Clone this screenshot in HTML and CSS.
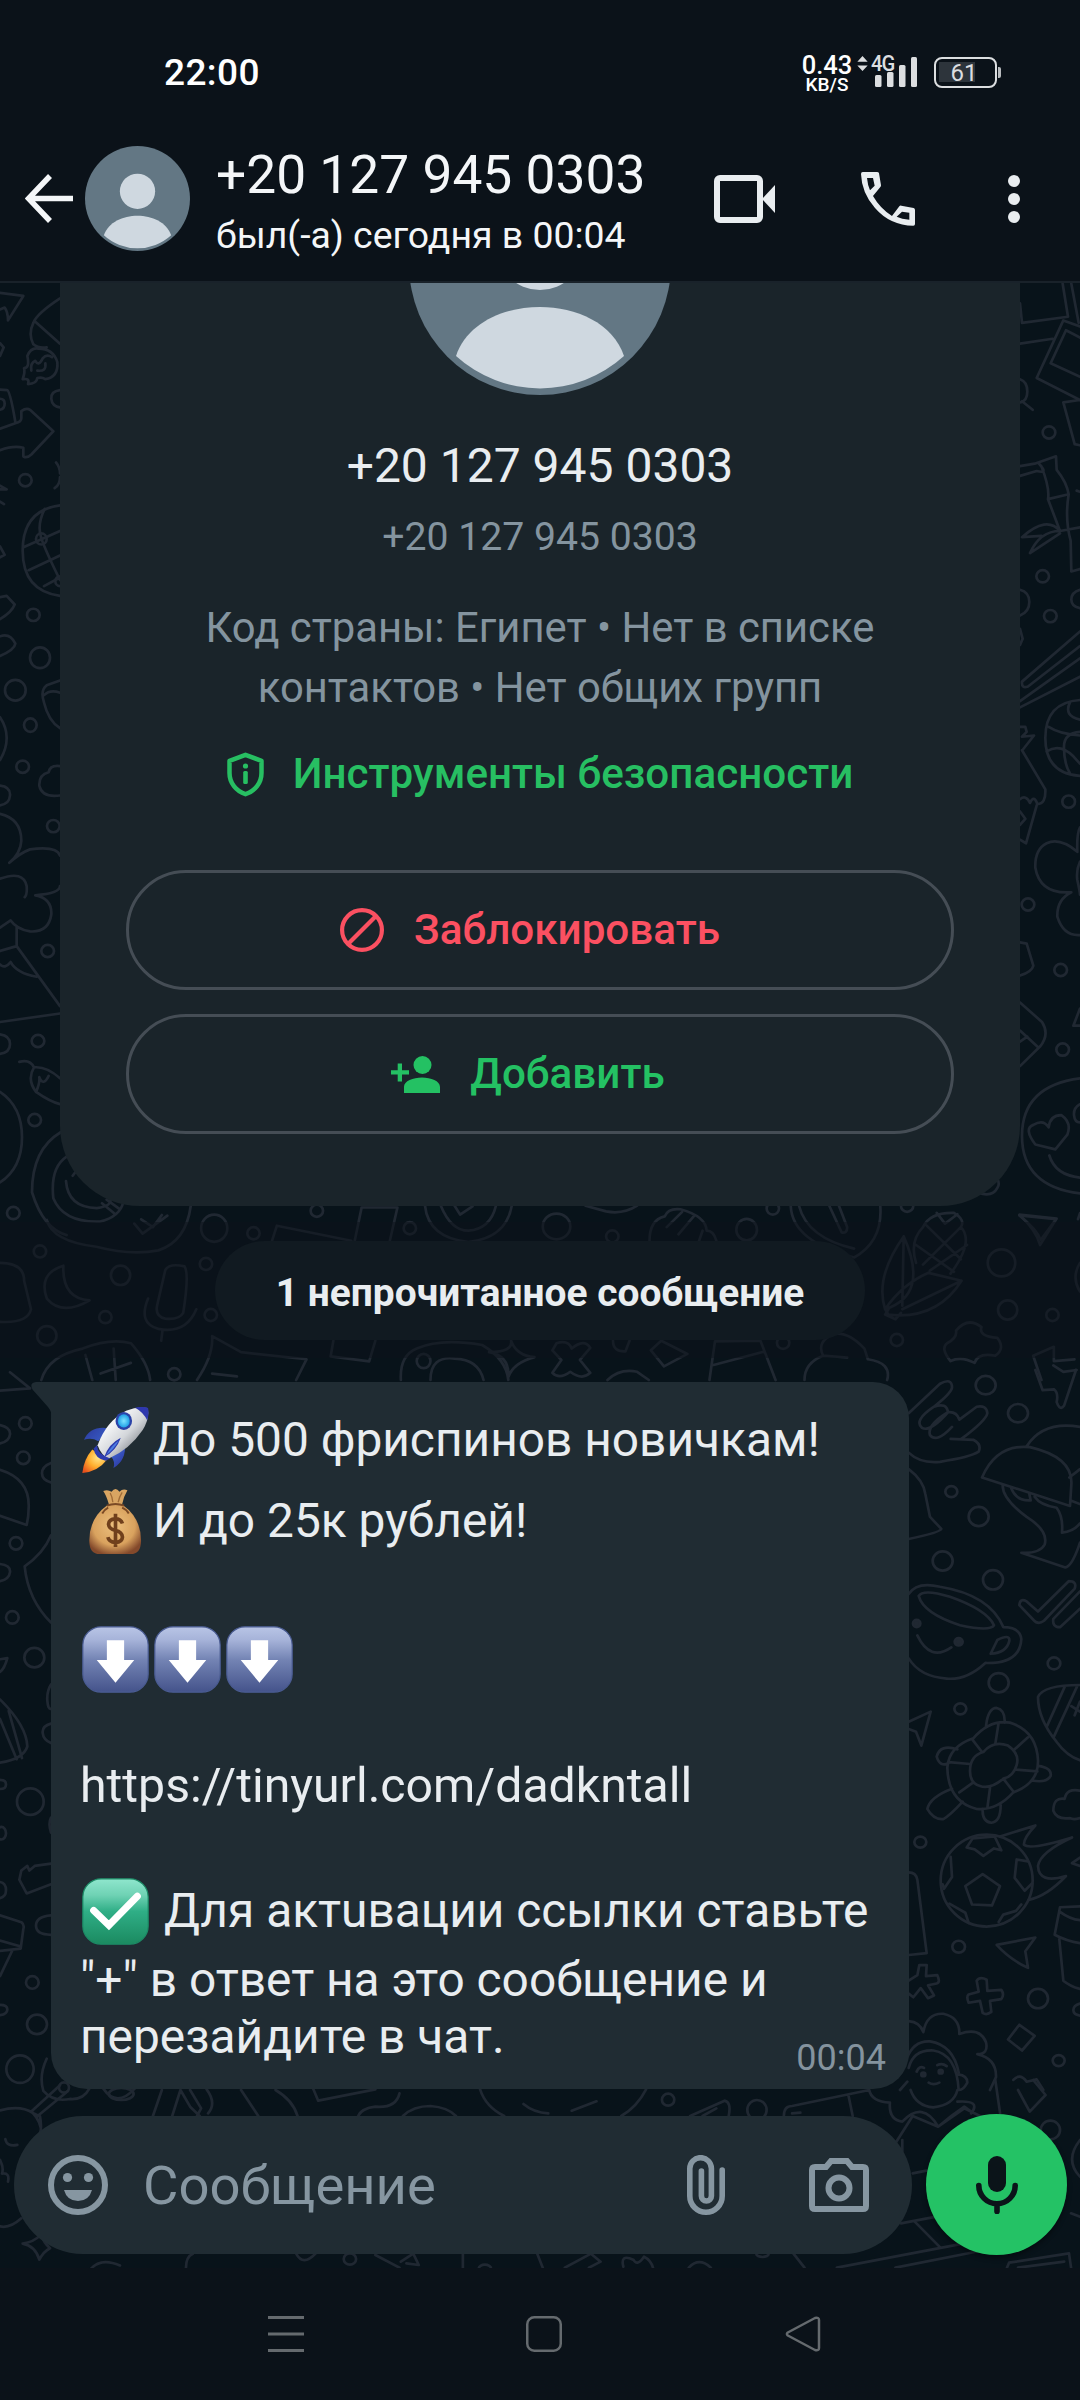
FILE: index.html
```html
<!DOCTYPE html>
<html lang="ru">
<head>
<meta charset="utf-8">
<title>Чат</title>
<link rel="stylesheet" href="styles.css">
</head>
<body>
<div class="phone">
  <div class="status">
    <span class="time">22:00</span>
    <div class="status-right">
      <div class="speed"><span class="speed-num">0.43</span><span class="speed-unit">KB/S</span></div>
      <svg class="updown" viewBox="0 0 11 16"><path d="M5.5 0 11 6H0zM5.5 16 0 10h11z" fill="#dcdee0"/></svg>
      <div class="signal">
        <span class="net">4G</span>
        <svg class="bars" width="42" height="30" viewBox="0 0 42 30"><g fill="#dcdee0"><rect x="0" y="18" width="6.500" height="12" rx="1.500"/><rect x="12" y="15" width="6.500" height="15" rx="1.500"/><rect x="24" y="8" width="6.500" height="22" rx="1.500"/><rect x="36" y="0" width="6" height="30" rx="1.500"/></g></svg>
      </div>
      <div class="battery"><span class="battery-num">61</span></div>
      <span class="nub"></span>
    </div>
  </div>

  <header class="header">
    <svg class="back" width="48" height="50" viewBox="0 0 48 50" fill="none" stroke="#f4f6f8" stroke-width="5.500"><path d="M25 2 3.500 24.500 25 47M4 24.500H48"/></svg>
    <svg class="avatar" viewBox="0 0 262 262"><circle cx="131" cy="131" r="131" fill="#637784"/><circle cx="131" cy="113" r="44" fill="#cfd8e0"/><path d="M47 223C58 190 95 174 131 174S204 190 215 223A125 125 0 0 1 47 223z" fill="#cfd8e0"/></svg>
    <div class="who">
      <div class="who-name">+20 127 945 0303</div>
      <div class="who-seen">был(-а) сегодня в 00:04</div>
    </div>
    <svg class="video" width="62" height="48" viewBox="0 0 62 48"><rect x="3" y="3" width="43" height="42" rx="3" fill="none" stroke="#e9edf0" stroke-width="6"/><path d="M48 24 61 10V38z" fill="#e9edf0"/></svg>
    <svg class="call" width="54" height="54" viewBox="243 396 162 162"><path fill="#e9edf0" fill-rule="evenodd" d="M248 396H291Q296 396 297 400L303 436 Q303 439 301 441L279 468Q300 505 336 528L358 499Q360 496 364 497L401 504Q405 505 405 510V552Q405 557 400 557.500Q330 556 285 504Q245 459 243 402Q243 396 248 396zM261 414H279L284 437 270 451Q263 435 261 414zM388 518V539Q365 537 350 530L366 515z"/></svg>
    <svg class="more" width="12" height="48" viewBox="0 0 12 48" fill="#e9edf0"><circle cx="6" cy="6" r="6"/><circle cx="6" cy="24" r="6"/><circle cx="6" cy="42" r="6"/></svg>
  </header>

  <main class="chat">
    <svg class="doodles" width="1080" height="1985" viewBox="0 283 1080 1985" fill="none" stroke="#202832">
      <!-- left edge, upper part -->
      <g transform="translate(0 280) scale(.33333 .61224)">
        <path d="M0 21 70 26 24 66Q24 52 14 45L0 48M0 103 11 110 0 124M0 179 22 180Q30 180 46 232M0 194Q14 194 14 202T0 212M0 243 46 234Q64 232 64 226V214Q80 208 90 212L160 247 94 285Q80 292 70 288V274Q40 270 0 278M0 336 20 342H0M0 362 12 366M0 435 14 449 0 453"/>
        <path d="M180 30Q110 55 100 70Q84 88 100 105Q115 112 140 110M106 68 180 104M68 162Q76 150 72 144Q90 144 82 124Q92 110 115 112Q160 112 172 134Q176 158 136 162Q126 158 112 160Q110 170 84 170Q90 160 70 162M94 148Q90 136 106 132Q116 142 128 128Q140 120 156 126M112 148Q140 150 136 136"/>
        <path d="M180 180Q152 182 154 194T180 208M168 298Q180 306 180 316M164 340Q180 334 180 322"/>
        <path d="M180 368Q68 376 68 442T180 516M134 374Q110 400 124 422T180 490M72 436 180 410M86 474 180 450M132 500 180 486"/><ellipse cx="124" cy="423" rx="16" ry="9"/><ellipse cx="180" cy="492" rx="14" ry="8"/>
        <path d="M0 518 20 516 44 530Q36 542 0 554M0 582Q30 576 46 594Q44 604 0 614M0 714Q20 730 20 748T0 784M0 826Q32 828 30 842T0 858M180 654 140 662Q120 670 132 690Q145 720 180 732M132 678Q150 668 180 674M180 794Q150 792 146 804Q116 808 118 826Q126 846 180 842"/>
        <path d="M0 872Q64 880 64 916Q62 936 28 952Q60 936 90 930Q170 924 180 940M0 978Q70 964 80 990 82 1004 74 1008M106 1005Q180 1002 180 990M106 1005Q156 1010 154 1036Q146 1066 90 1064Q50 1060 32 1046L0 1058M50 1056V1088L0 1096M50 1088 180 1186M0 1118Q14 1126 32 1114Q50 1132 110 1138M0 1212 180 1198M0 1232Q30 1234 30 1248T0 1264"/>
        <path d="M58 1277Q90 1272 102 1286Q140 1284 180 1304M102 1286Q80 1306 108 1326Q120 1312 118 1302Q130 1318 146 1300M108 1326Q150 1342 180 1346M0 1326Q66 1350 66 1400T0 1474M182 1392Q96 1420 96 1490Q130 1550 200 1560M200 1432Q150 1450 160 1500Q190 1540 300 1538Q360 1530 370 1506M198 1472Q204 1515 290 1516Q340 1512 330 1500M218 1463 228 1456M306 1508 346 1526M320 1502 360 1518"/>
        <ellipse cx="76" cy="327" rx="19" ry="10"/><ellipse cx="100" cy="547" rx="19" ry="10"/><ellipse cx="120" cy="617" rx="30" ry="17"/><ellipse cx="46" cy="670" rx="31" ry="17"/><ellipse cx="91" cy="727" rx="19" ry="11"/><ellipse cx="68" cy="795" rx="19" ry="10"/><ellipse cx="160" cy="892" rx="19" ry="10"/><ellipse cx="143" cy="1096" rx="19" ry="10"/><ellipse cx="114" cy="1243" rx="19" ry="10"/><ellipse cx="104" cy="1372" rx="19" ry="10"/><ellipse cx="40" cy="1524" rx="19" ry="10"/>
      </g>
      <!-- right edge, upper part -->
      <g transform="translate(1000 280) scale(.33333 .61224)">
        <path d="M60 38 66 70 204 60 188 6M214 6 236 70M60 104 158 96M240 76 190 66 110 160 240 196M240 94 198 82 152 136 240 158M240 196 190 200 224 268 240 270M60 162Q82 166 82 182T60 200M66 198 98 212M60 304 104 300 168 288 170 310Q200 330 206 350L144 358Q150 340 124 304Q110 296 126 306Q140 316 110 312L60 320M144 358 180 410 240 404M206 350Q194 390 212 426L214 476 240 472M180 410Q140 384 66 420L124 418M180 410Q120 410 90 446L180 414M230 344 240 346M60 506Q88 510 88 526T60 548M60 570 68 586 60 596M240 506Q214 510 214 522T240 536"/>
        <path d="M240 574 66 656Q64 668 84 664L240 598M60 688 240 618M60 698 240 648M60 730 76 730 80 738 66 746 102 744 70 766M66 768 136 832Q138 856 112 856Q102 840 90 854 78 840 60 848M110 858 78 920 60 914M60 868 76 880 60 890"/>
        <path d="M240 686Q136 690 136 748T240 810M210 690Q190 712 240 718M146 730Q180 742 240 744M240 738Q190 740 192 764Q192 790 210 806M140 770Q180 756 220 778L240 790"/>
        <path d="M240 894Q230 904 232 934Q180 910 140 920Q104 930 106 960Q120 1004 214 1000Q170 1012 172 1040Q190 1072 240 1070M240 950Q228 964 232 980 240 1000 240 1004M60 1082 80 1084 100 1120Q96 1130 60 1136M60 1180 126 1212Q150 1232 120 1252L60 1284M60 1226 112 1252M60 1244 82 1236M240 1190 220 1218H240"/>
        <path d="M240 1304Q66 1316 66 1398T240 1492M146 1384Q150 1364 184 1364Q216 1376 202 1396L166 1420 106 1412Q70 1386 100 1380Q130 1370 146 1384zM240 1346Q220 1352 222 1364T240 1376M148 1430Q166 1462 240 1466M58 1528 168 1534 122 1568Q110 1550 58 1528M240 1524 234 1534"/>
        <ellipse cx="147" cy="249" rx="19" ry="10"/><ellipse cx="128" cy="484" rx="19" ry="10"/><ellipse cx="151" cy="549" rx="19" ry="10"/><ellipse cx="206" cy="852" rx="19" ry="10"/><ellipse cx="84" cy="1020" rx="19" ry="10"/><ellipse cx="182" cy="1127" rx="19" ry="10"/><ellipse cx="188" cy="1257" rx="19" ry="10"/>
      </g>
      <!-- band between the contact card and the message -->
      <g transform="translate(0 820) scale(.68878 .35714)">
        <path d="M68 1120Q76 1180 140 1195Q190 1220 230 1205Q270 1180 277 1080M195 1130 207 1158 243 1108M205 1118 222 1140 235 1106M395 1178 402 1136 510 1178M515 1178 525 1085 577 1085 566 1178M617 1080Q622 1170 680 1182Q735 1170 743 1080M640 1080Q655 1150 680 1150Q712 1145 720 1080M660 1080 668 1105 686 1082M850 1080 880 1096Q905 1105 925 1080M943 1178Q943 1120 965 1110 970 1086 988 1090Q1025 1110 1026 1150Q1036 1150 1040 1178M968 1140 990 1098M985 1160 1008 1108M1015 1178 1020 1150M1148 1080Q1150 1180 1240 1225Q1282 1180 1278 1080M1160 1080Q1172 1170 1240 1200M1204 1080 1222 1155Q1230 1158 1230 1140L1218 1080M1416 1040Q1440 1060 1448 1030 1452 1020 1448 1005"/>
        <path d="M1480 1105 1534 1116 1510 1190Q1505 1150 1480 1105zM1312 1166Q1270 1280 1285 1370Q1350 1330 1312 1166zM1312 1166 1310 1360M1340 1140Q1350 1098 1385 1100 1402 1120 1395 1140Q1415 1180 1380 1270M1340 1140Q1320 1180 1330 1240M1345 1135 1395 1230M1330 1190 1385 1265M1395 1140 1340 1245M1404 1190 1350 1262M1360 1100 1372 1130 1390 1104M1285 1370Q1310 1300 1348 1268L1396 1290Q1360 1400 1290 1385zM1396 1290 1310 1370M1290 1370 1285 1385 1300 1398 1308 1380"/>
        <path d="M0 1240Q35 1240 35 1290L45 1370Q40 1410 0 1405M92 1248Q55 1270 68 1340Q90 1390 130 1345Q90 1340 92 1248zM240 1260Q246 1240 268 1250Q275 1270 266 1380 260 1400 240 1396 225 1390 228 1360zM215 1340Q200 1410 230 1425 270 1440 285 1370M236 1428 234 1458M1380 1515Q1365 1480 1375 1465 1390 1450 1388 1430 1405 1390 1425 1420 1420 1445 1448 1450 1460 1480 1445 1500 1420 1490 1415 1520 1395 1500 1380 1515zM1568 1240Q1555 1280 1568 1320"/>
        <path d="M60 1568Q70 1500 120 1480 160 1450 190 1465 215 1520 218 1568M124 1498 134 1568M165 1480 168 1568M146 1550 190 1520M286 1568Q310 1500 308 1445L350 1490 445 1510 430 1568M308 1550 344 1558M484 1458 480 1502 536 1516 545 1458M582 1568Q580 1500 605 1480 640 1450 700 1470 735 1510 738 1568M625 1568Q625 1500 660 1508 695 1510 702 1568M710 1490Q745 1490 742 1458 750 1500 776 1504 745 1520 738 1560 740 1500 710 1490M808 1465Q825 1455 830 1480 848 1450 857 1478L842 1512 857 1548Q845 1570 828 1545 812 1568 802 1548L815 1512 802 1485zM890 1458Q890 1490 908 1488L914 1458M945 1485 960 1458 998 1495 964 1530zM1030 1568 1038 1460 1104 1458 1126 1568M1036 1526 1110 1488M882 1568Q900 1535 925 1545L942 1568M1168 1568Q1168 1520 1195 1500 1185 1460 1210 1440 1230 1430 1255 1480L1260 1510Q1295 1520 1288 1568M1195 1500 1230 1505M1500 1500 1530 1475 1530 1515 1560 1510M1500 1500 1512 1568"/>
        <ellipse cx="460" cy="1094" rx="9" ry="17"/><ellipse cx="311" cy="1143" rx="19" ry="38"/><ellipse cx="368" cy="1157" rx="9" ry="17"/><ellipse cx="595" cy="1143" rx="9" ry="17"/><ellipse cx="808" cy="1138" rx="20" ry="36"/><ellipse cx="889" cy="1166" rx="9" ry="17"/><ellipse cx="1084" cy="1147" rx="15" ry="30"/><ellipse cx="58" cy="1208" rx="9" ry="17"/><ellipse cx="175" cy="1275" rx="14" ry="27"/><ellipse cx="299" cy="1243" rx="9" ry="17"/><ellipse cx="153" cy="1392" rx="9" ry="17"/><ellipse cx="306" cy="1386" rx="9" ry="17"/><ellipse cx="68" cy="1444" rx="14" ry="27"/><ellipse cx="253" cy="1552" rx="9" ry="17"/><ellipse cx="615" cy="1515" rx="10" ry="20"/><ellipse cx="1122" cy="1088" rx="9" ry="17"/><ellipse cx="1454" cy="1240" rx="20" ry="38"/><ellipse cx="1463" cy="1372" rx="14" ry="27"/><ellipse cx="1528" cy="1386" rx="9" ry="17"/><ellipse cx="1302" cy="1456" rx="9" ry="17"/><ellipse cx="1137" cy="1464" rx="9" ry="17"/><ellipse cx="1317" cy="1080" rx="9" ry="17"/>
      </g>
      <!-- left edge, lower part -->
      <g transform="translate(0 1370) scale(.33333 .57398)">
        <path d="M0 36 90 32M90 32 30 4M0 96Q32 100 30 112T0 128M0 174Q90 190 86 240Q86 256 80 270L0 254M153 288Q130 320 74 342Q84 400 153 440M0 338Q32 340 30 352T0 368M0 504 22 502Q14 520 0 526M0 574Q80 620 82 656Q70 678 0 684M0 608 50 678M26 594 66 676M153 162Q126 168 126 180T153 196M153 548Q140 560 142 576T153 590M153 616Q126 620 128 632T153 650M0 714Q18 714 18 722T0 730M153 780Q144 790 153 806M58 888 64 872 82 864 88 872 104 864 153 860M58 888 80 912 153 896M0 892Q18 894 18 906T0 920M0 950 64 962Q74 966 70 974L62 1008 0 1012M38 1010 0 1056M0 994 60 1004M0 1106Q22 1106 22 1114T0 1124M153 950Q108 952 108 968T153 984"/>
        <path d="M140 1200Q116 1230 130 1256 160 1276 210 1270 250 1272 268 1252M94 1292 180 1246M112 1300 204 1256M94 1292Q80 1290 120 1300Q126 1320 120 1330M0 1290Q60 1280 98 1294 124 1310 124 1330M0 1492Q30 1496 64 1478M16 1340Q20 1354 52 1350M0 1376Q12 1390 6 1400Q30 1398 24 1414M68 1522Q100 1520 124 1506Q130 1520 150 1530Q130 1536 118 1550Q106 1526 68 1522M310 1252Q350 1286 404 1252M270 1568Q300 1545 360 1560"/>
        <ellipse cx="192" cy="1250" rx="15" ry="9"/><ellipse cx="76" cy="93" rx="19" ry="11"/><ellipse cx="70" cy="153" rx="19" ry="11"/><ellipse cx="48" cy="302" rx="19" ry="11"/><ellipse cx="37" cy="431" rx="19" ry="11"/><ellipse cx="103" cy="501" rx="30" ry="17"/><ellipse cx="91" cy="752" rx="40" ry="23"/><ellipse cx="4" cy="807" rx="14" ry="11"/><ellipse cx="97" cy="1067" rx="19" ry="11"/><ellipse cx="111" cy="1140" rx="30" ry="17"/><ellipse cx="60" cy="1218" rx="41" ry="24"/>
      </g>
      <!-- right edge, lower part -->
      <g transform="translate(880 1370) scale(.33333 .45918)">
        <path d="M86 94 180 30Q216 16 216 38Q215 50 162 80Q100 110 126 126Q150 136 204 92Q200 70 162 80M204 92Q140 120 150 142Q170 160 216 124M204 92Q230 90 238 108L290 80Q320 76 322 94Q318 110 244 150M212 150 280 152Q306 162 296 178Q270 190 180 200Q120 204 86 180M466 0 488 44 522 42Q536 50 530 70 540 90 552 78L588 0M520 -10 550 4 590 0"/>
        <path d="M86 216Q130 240 136 270L150 320 184 346Q180 354 86 368M306 234Q350 160 450 168Q580 190 574 250L570 296zM440 166Q490 110 600 124M568 234 600 216M572 284 600 292M368 250Q366 280 440 320 506 350 494 380 480 400 424 398L556 430Q576 428 600 376M394 258Q410 286 452 284L448 270M464 276Q480 294 530 300 550 320 546 354 580 352 600 334"/>
        <path d="M86 488Q110 460 180 472 330 490 370 560Q420 560 424 586 420 640 316 638 260 676 200 672 120 668 86 628M116 492Q130 476 210 494 320 522 342 556 330 570 240 556 130 530 116 492zM112 578Q150 636 214 604M332 618 352 588Q390 574 388 590 380 616 332 618z"/><ellipse cx="110" cy="552" rx="11" ry="8" fill="#202832"/><ellipse cx="236" cy="592" rx="12" ry="8" fill="#202832"/>
        <path d="M418 512Q420 496 440 504L474 526 566 460Q592 460 584 476L492 546Q474 556 460 544zM600 482 520 542Q516 560 540 560L600 520M86 766 152 744 124 818 108 788 86 782M600 686Q490 686 474 712 474 760 530 810 560 840 600 850M554 690 502 774M592 688 522 798M574 732 600 744M600 722 584 752"/>
        <path d="M202 866Q206 820 280 802 330 760 390 768 470 786 474 850 476 900 400 920 350 960 290 956 204 940 202 866zM270 874Q270 840 310 832 340 806 384 818 420 836 410 860 400 886 370 890 330 914 300 906 270 900 270 874zM356 768 346 814M444 800 404 826M472 874 406 870M400 918 370 890M322 954 330 910M238 920 280 898M206 854 270 858M276 804 306 832M318 776Q324 736 350 736 376 740 374 768M232 826Q180 814 170 842 180 866 206 856M474 862Q516 866 512 884 500 900 456 894M216 912Q150 930 142 956 160 980 190 978 210 970 248 940M308 956Q306 984 334 986 362 984 362 948M600 916Q560 910 554 934 520 930 520 960 530 980 570 976 580 980 600 976"/>
        <ellipse cx="320" cy="1112" rx="138" ry="100"/>
        <path d="M308 1098 360 1124 336 1166 276 1164 256 1124zM260 1040 278 1020 344 1016 364 1046 342 1042 310 1058 284 1044zM212 1060 216 1104 192 1130 188 1120M444 1070 410 1066 404 1106 434 1134 456 1118M208 1162 256 1182 266 1204M356 1202 370 1186 408 1178 424 1164M360 1016Q430 1000 466 992 430 1020 432 1034 450 1046 576 1018 480 1050 474 1080 476 1120 558 1102 500 1146 446 1154M600 1062 576 1074 600 1080M86 1094Q108 1094 112 1110L140 1270 86 1274M350 1252 466 1236 436 1266 444 1302Q390 1284 350 1252zM600 1168 540 1170 524 1230Q560 1244 600 1248M540 1180Q570 1196 600 1198M538 1240 550 1330Q570 1342 600 1348"/>
        <path d="M86 1330 112 1318 118 1296H140L138 1320 172 1318Q182 1334 170 1336L144 1340 162 1362 144 1368 122 1346 100 1366 86 1358M290 1330Q300 1320 320 1328L322 1352 364 1350Q374 1360 364 1370L330 1374 334 1398Q320 1406 308 1400L300 1374 266 1378Q258 1364 266 1360L296 1354zM384 1458 418 1426 464 1450 426 1482z"/>
        <path d="M86 1418Q120 1420 130 1442 140 1400 190 1402 240 1410 238 1446 300 1430 318 1464 326 1490 292 1490 350 1500 348 1540L330 1568M80 1500Q100 1460 150 1462 220 1470 236 1530M86 1520Q100 1480 160 1482 230 1490 236 1568M110 1528Q118 1514 132 1520M172 1514Q186 1508 200 1516M146 1552Q160 1558 178 1552M234 1534Q262 1536 262 1552 250 1568 238 1568M60 1568 82 1550M400 1546Q420 1530 440 1550L470 1545 490 1568M600 1380Q580 1384 580 1394T600 1406"/>
        <ellipse cx="130" cy="1534" rx="6" ry="4" fill="#202832"/><ellipse cx="182" cy="1528" rx="6" ry="4" fill="#202832"/>
        <ellipse cx="317" cy="33" rx="30" ry="20"/><ellipse cx="414" cy="94" rx="30" ry="20"/><ellipse cx="214" cy="265" rx="18" ry="12"/><ellipse cx="296" cy="319" rx="30" ry="21"/><ellipse cx="188" cy="416" rx="30" ry="21"/><ellipse cx="339" cy="457" rx="30" ry="21"/><ellipse cx="522" cy="639" rx="19" ry="13"/><ellipse cx="356" cy="681" rx="30" ry="21"/><ellipse cx="241" cy="738" rx="18" ry="12"/><ellipse cx="121" cy="1028" rx="18" ry="12"/><ellipse cx="236" cy="1256" rx="19" ry="13"/><ellipse cx="474" cy="1369" rx="30" ry="21"/><ellipse cx="536" cy="1504" rx="18" ry="12"/>
      </g>
      <!-- strip around the message field -->
      <g transform="translate(0 2080) scale(.68878 .33333)">
        <path d="M222 108 235 30M250 108 262 30 276 80 290 108M276 30 292 85 286 108M300 28Q315 70 302 100M350 30 375 108M400 30Q425 60 432 108M455 28 462 62 545 28M580 40Q575 85 545 80 525 85 520 108M585 108Q600 78 625 78 650 82 662 108M697 28Q705 80 732 108M938 28Q925 80 902 108M760 72Q775 98 796 100M830 92 866 64M1002 108 1052 62Q1062 66 1058 108M1020 108 1040 85M1138 108Q1138 78 1150 78L1262 30M1232 48 1238 108M1150 100 1162 98M1262 30Q1265 65 1292 68 1290 120 1310 125 1340 60 1362 140 1380 108 1400 80L1410 95M1300 190 1325 108 1362 140 1400 85 1425 110M1310 180V215M1322 30Q1330 78 1355 82 1385 75 1390 30M1390 65Q1425 60 1410 100M1445 0 1452 100M1478 30 1495 95 1518 45 1500 0M1325 280 1345 272M1308 430 1390 398M1328 425 1365 502M1215 563 1400 490M1300 563 1430 510M1462 563 1465 548 1552 520 1555 563M1478 563 1545 545M1568 180Q1545 240 1568 290M1555 400 1568 410M270 563Q270 530 280 521M545 525 580 563M582 545 600 521 608 555 590 550M780 521 788 563M820 563 858 521 872 545 855 563M905 560Q900 520 920 540 925 560 935 530 945 540 948 563M1000 563Q1015 530 1032 563M1152 521 1168 563M672 521V563M430 521Q440 560 458 521"/>
        <ellipse cx="176" cy="42" rx="18" ry="18"/><ellipse cx="970" cy="59" rx="9" ry="18"/><ellipse cx="1099" cy="90" rx="14" ry="30"/><ellipse cx="1525" cy="150" rx="14" ry="28"/><ellipse cx="508" cy="537" rx="9" ry="17"/><ellipse cx="1107" cy="521" rx="9" ry="10"/><ellipse cx="704" cy="566" rx="9" ry="12"/>
      </g>
    </svg>

    <section class="card">
      <svg class="card-avatar" viewBox="0 0 262 262"><circle cx="131" cy="131" r="131" fill="#637784"/><circle cx="131" cy="113" r="44" fill="#cfd8e0"/><path d="M47 223C58 190 95 174 131 174S204 190 215 223A125 125 0 0 1 47 223z" fill="#cfd8e0"/></svg>
      <div class="card-name">+20 127 945 0303</div>
      <div class="card-number">+20 127 945 0303</div>
      <div class="card-info">Код страны: Египет • Нет в списке<br>контактов • Нет общих групп</div>
      <div class="safety">
        <svg width="37" height="45" viewBox="0 0 37 45"><path d="M18.500 2.800 34.500 8.800V21C34.500 31 28 39 18.500 42.200 9 39 2.500 31 2.500 21V8.800z" fill="none" stroke="#27bf62" stroke-width="4.500" stroke-linejoin="round"/><circle cx="18.500" cy="14" r="2.600" fill="#27bf62"/><rect x="16.200" y="19" width="4.600" height="13" rx="1.500" fill="#27bf62"/></svg>
        <span>Инструменты безопасности</span>
      </div>
      <div class="actions">
        <div class="action block">
          <svg width="44" height="44" viewBox="0 0 44 44" fill="none" stroke="#fb5061" stroke-width="4.200"><circle cx="22" cy="22" r="19.900"/><path d="M8 36 36 8"/></svg>
          <span>Заблокировать</span>
        </div>
        <div class="action add">
          <svg width="49" height="37" viewBox="0 0 49 37" fill="#24c163"><circle cx="31.500" cy="9" r="9"/><path d="M13 37V31C13 25 22 21.500 31 21.500S49 25 49 31V37zM6.700 7.500h4.300v6.800h7v4.300h-7v7H6.700v-7H0v-4.300h6.700z"/></svg>
          <span>Добавить</span>
        </div>
      </div>
    </section>

    <div class="unread"><span class="unread-pill">1 непрочитанное сообщение</span></div>

    <article class="bubble">
      <svg class="tail" width="21" height="36" viewBox="0 0 21 36"><path d="M5 0H21V36Q21 30 17 25L1.500 7.500Q-2 1 5 0z" fill="#202c33"/></svg>
      <div class="line tall">
        <svg class="emoji" viewBox="37 37 202 202">
          <defs>
            <linearGradient id="hull" x1="0" y1="0" x2="1" y2="1"><stop offset=".25" stop-color="#fafbfc"/><stop offset=".55" stop-color="#d3d6da"/><stop offset=".8" stop-color="#85898f"/></linearGradient>
            <linearGradient id="fin" x1="0" y1="0" x2="1" y2="1"><stop offset="0" stop-color="#2b3a9c"/><stop offset=".6" stop-color="#3f6ad8"/><stop offset="1" stop-color="#2a2f96"/></linearGradient>
            <radialGradient id="flame" cx=".65" cy=".35" r=".8"><stop offset="0" stop-color="#ffe68a"/><stop offset=".5" stop-color="#ffae2e"/><stop offset="1" stop-color="#e8501c"/></radialGradient>
            <radialGradient id="glass"><stop offset="0" stop-color="#7fe3ff"/><stop offset="1" stop-color="#1fa0e6"/></radialGradient>
          </defs>
          <path d="M68 165Q42 195 38 236Q85 232 112 196z" fill="url(#flame)"/>
          <path d="M118 101Q62 92 43 136Q66 128 86 140zM166 146Q172 196 132 221Q138 200 124 186z" fill="url(#fin)"/>
          <path d="M84 152Q110 80 170 48Q205 34 235 40Q242 70 220 106Q180 165 118 192Q96 185 84 152z" fill="url(#hull)"/>
          <path d="M197 39Q220 34 236 40Q240 56 234 78Q222 52 197 39z" fill="#2f38ae"/>
          <path d="M82 152Q84 180 122 192L108 199Q76 192 72 162zM154 130Q140 170 104 188Q118 148 154 130z" fill="#2d3cae"/>
          <path d="M148 138Q132 166 110 182Q126 152 148 138z" fill="#4b7de2"/>
          <ellipse cx="163" cy="79" rx="25" ry="27" fill="#2b43a8"/><ellipse cx="163" cy="79" rx="18" ry="20" fill="url(#glass)"/>
        </svg><span>До 500 фриспинов новичкам!</span>
      </div>
      <div class="line tall">
        <svg class="emoji" viewBox="37 279 202 202">
          <defs><radialGradient id="sack" cx=".48" cy=".42" r=".62"><stop offset="0" stop-color="#ecc07e"/><stop offset=".65" stop-color="#d9a25e"/><stop offset="1" stop-color="#83492b"/></radialGradient></defs>
          <path d="M114 330Q58 370 59 440Q60 478 90 478H184Q214 478 215 440Q216 370 160 330z" fill="url(#sack)"/>
          <path d="M118 328Q110 300 101 288Q114 282 126 290Q138 274 150 290Q160 280 174 286Q162 306 158 328z" fill="#d9a562"/>
          <path d="M130 322Q128 304 122 294M146 322Q150 304 158 292" stroke="#a06c38" stroke-width="4" fill="none"/>
          <path d="M112 332Q138 322 164 332M116 338Q104 344 98 356M158 338Q172 344 178 356" stroke="#7b4a25" stroke-width="6" fill="none"/>
          <path d="M159 386Q154 372 138 372Q118 373 117 388Q118 403 138 407Q158 411 159 427Q158 442 138 443Q118 442 115 427M138 357V457" stroke="#70401c" stroke-width="11" fill="none"/>
        </svg><span>И до 25к рублей!</span>
      </div>
      <div class="line"></div>
      <div class="line tall arrows">
        <svg class="emoji" viewBox="0 0 66 66"><defs><linearGradient id="key" x1="0" y1="0" x2="0" y2="1"><stop offset="0" stop-color="#b9c5e6"/><stop offset=".2" stop-color="#a6b3d9"/><stop offset=".5" stop-color="#7484b4"/><stop offset="1" stop-color="#44538b"/></linearGradient></defs><rect x=".8" y=".8" width="64.400" height="64.400" rx="18" fill="url(#key)" stroke="#4a5c93" stroke-width="1.200"/><path d="M24.500 14H41.500V33.500H51.500L33 56 14.500 33.500H24.500z" fill="#fff"/></svg>
        <svg class="emoji" viewBox="0 0 66 66"><rect x=".8" y=".8" width="64.400" height="64.400" rx="18" fill="url(#key)" stroke="#4a5c93" stroke-width="1.200"/><path d="M24.500 14H41.500V33.500H51.500L33 56 14.500 33.500H24.500z" fill="#fff"/></svg>
        <svg class="emoji" viewBox="0 0 66 66"><rect x=".8" y=".8" width="64.400" height="64.400" rx="18" fill="url(#key)" stroke="#4a5c93" stroke-width="1.200"/><path d="M24.500 14H41.500V33.500H51.500L33 56 14.500 33.500H24.500z" fill="#fff"/></svg>
      </div>
      <div class="line"></div>
      <div class="line link">https://tinyurl.com/dadkntall</div>
      <div class="line"></div>
      <div class="line tall check">
        <svg class="emoji" viewBox="0 0 66 66"><defs><linearGradient id="ok" x1="0" y1="0" x2="0" y2="1"><stop offset="0" stop-color="#8fe6cd"/><stop offset=".25" stop-color="#6fd2b4"/><stop offset=".5" stop-color="#2fae86"/><stop offset="1" stop-color="#1b8a60"/></linearGradient></defs><rect x=".8" y=".8" width="64.400" height="64.400" rx="18" fill="url(#ok)" stroke="#1c8b66" stroke-width="1.200"/><path d="M11.500 32 26.500 46.500 54.500 18" fill="none" stroke="#fff" stroke-width="7" stroke-linecap="round"/></svg><span>Для актuвации ссылки ставьте</span>
      </div>
      <div class="line">"+" в ответ на это сообщение и</div>
      <div class="line">перезайдите в чат.</div>
      <span class="sent">00:04</span>
    </article>

    <div class="composer">
      <div class="field">
        <svg width="60" height="60" viewBox="0 0 60 60" fill="#8696a1"><circle cx="30" cy="30" r="27" fill="none" stroke="#8696a1" stroke-width="6"/><circle cx="19.500" cy="22.500" r="4.600"/><circle cx="40.500" cy="22.500" r="4.600"/><path d="M16 35H44Q41 46 30 46T16 35z"/></svg>
        <span class="placeholder">Сообщение</span>
        <svg class="clip" width="38" height="60" viewBox="0 0 38 60" fill="none" stroke="#8696a1" stroke-width="5.600" stroke-linecap="round"><path d="M35.200 15V41A16.200 16.200 0 0 1 2.800 41V13.500A10.800 10.800 0 0 1 24.400 13.500V41A5 5 0 0 1 14.400 41V16"/></svg>
        <svg class="camera" width="60" height="54" viewBox="0 0 60 54" fill="none" stroke="#8696a1" stroke-width="6"><path d="M6 9H17L22 3H38L43 9H54Q57 9 57 12V48Q57 51 54 51H6Q3 51 3 48V12Q3 9 6 9z"/><circle cx="30" cy="30" r="10.500"/></svg>
      </div>
      <div class="mic"><svg width="42" height="58" viewBox="0 0 42 58"><rect x="12" y="0" width="18" height="36" rx="9" fill="#0b1419"/><path d="M2.800 29.500A18.200 18.200 0 0 0 39.200 29.500M21 48V55.500" fill="none" stroke="#0b1419" stroke-width="5.600" stroke-linecap="round"/></svg></div>
    </div>
  </main>

  <nav class="nav">
    <svg width="36" height="36" viewBox="0 0 36 36" stroke="#656a6e" stroke-width="3"><path d="M0 1.500H36M0 18H36M0 34.500H36"/></svg>
    <svg width="36" height="36" viewBox="0 0 36 36" fill="none" stroke="#656a6e" stroke-width="2.500"><rect x="1.250" y="1.250" width="33.500" height="33.500" rx="7"/></svg>
    <svg width="36" height="36" viewBox="0 0 36 36" fill="none" stroke="#656a6e" stroke-width="2.500" stroke-linejoin="round"><path d="M30 2 2.800 16.500Q1 18 2.800 19.500L30 34Q34 35 34 32V4Q34 1 30 2z"/></svg>
  </nav>
</div>
</body>
</html>
```
FILE: styles.css
```css
* { box-sizing: border-box; }
body { margin: 0; background: #0b1219; font-family: Roboto, sans-serif; }
svg { display: block; flex: none; }
span { white-space: nowrap; }

.phone { width: 1080px; height: 2400px; display: flex; flex-direction: column; overflow: hidden; }

/* status bar */
.status { height: 128px; padding: 50px 79px 0 164px; display: flex; justify-content: space-between; align-items: flex-start; }
.time { margin-top: 1px; font-size: 37px; line-height: 44px; font-weight: 500; color: #fff; letter-spacing: .4px; }
.status-right { display: flex; align-items: flex-start; }
.speed { width: 50px; margin: 4px 5px 0 0; display: flex; flex-direction: column; align-items: center; color: #fff; font-weight: 500; }
.speed-num { font-size: 25.5px; line-height: 22px; }
.speed-unit { font-size: 19px; line-height: 18px; }
.updown { width: 11px; height: 15px; margin: 6px 4px 0 0; }
.signal { position: relative; width: 46px; height: 38px; padding: 7px 0 0 3px; margin-right: 16px; }
.net { position: absolute; left: -1px; top: 3px; font-size: 22px; line-height: 22px; font-weight: 500; color: #dcdee0; letter-spacing: -1px; transform: scaleX(.92); transform-origin: left; }
.battery { width: 63px; height: 31px; margin-top: 7px; padding: 0 3px 0 0; border: 2.5px solid #dcdee0; border-radius: 8px; display: flex; align-items: center; justify-content: center; background: linear-gradient(#2d343b, #2d343b) 3px 3px / 36px 20px no-repeat; }
.battery-num { font-size: 24px; line-height: 26px; color: #dcdee0; }
.nub { width: 3px; height: 11px; margin: 17px 0 0 1px; background: #b9bcbf; border-radius: 0 2px 2px 0; }

/* chat header */
.header { height: 155px; border-bottom: 2px solid #19222a; display: flex; align-items: flex-start; padding: 18px 60px 0 25px; }
.back { margin-top: 28px; }
.avatar { width: 105px; height: 105px; margin: 0 26px 0 12px; }
.who { width: 498px; color: #f4f6f8; }
.who-name { font-size: 53.3px; line-height: 60px; margin-top: -1px; white-space: nowrap; }
.who-seen { font-size: 37.4px; line-height: 44px; margin-top: 8px; white-space: nowrap; }
.video { margin-top: 29px; }
.call { margin: 26px 93px 0 85px; }
.more { margin-top: 29px; }

/* conversation */
.chat { position: relative; flex: 1; overflow: hidden; background: #08131a; display: flex; flex-direction: column; }
.doodles { position: absolute; left: 0; top: 0; }
.doodles path, .doodles ellipse { vector-effect: non-scaling-stroke; stroke-width: 2.7px; stroke-linecap: round; stroke-linejoin: round; }
.card, .unread, .bubble, .composer { position: relative; }

.card { width: 960px; height: 923px; margin: 0 auto; background: #1a242a; border-radius: 0 0 80px 80px; display: flex; flex-direction: column; align-items: center; text-align: center; color: #84949f; }
.card-avatar { width: 262px; height: 262px; margin-top: -150px; }
.card-name { margin-top: 43px; font-size: 48px; line-height: 56px; color: #e9edf0; }
.card-number { margin-top: 20px; font-size: 39.2px; line-height: 46px; }
.card-info { margin-top: 38px; font-size: 41.8px; line-height: 60px; white-space: nowrap; }
.safety { margin-top: 26px; display: flex; align-items: center; gap: 29px; font-size: 42.2px; line-height: 60px; font-weight: 500; color: #27bf62; }
.actions { width: 828px; margin-top: 66px; display: flex; flex-direction: column; gap: 24px; }
.action { height: 120px; border: 3px solid #454d55; border-radius: 60px; display: flex; align-items: center; justify-content: center; gap: 30px; padding-right: 20px; font-size: 42.2px; line-height: 60px; font-weight: 500; }
.block { color: #fb5061; }
.add { color: #24c163; padding-right: 24px; }

.unread { height: 136px; margin-top: 16px; background: rgba(11, 18, 25, .5); display: flex; align-items: center; justify-content: center; }
.unread-pill { width: 650px; height: 99px; padding-top: 3px; border-radius: 50px; background: #111a21; color: #e9edf0; font-size: 38.9px; line-height: 98px; font-weight: 700; text-align: center; }

.bubble { width: 858px; height: 707px; margin: 24px 0 0 51px; padding: 18px 29px 0; background: #202c33; border-radius: 0 36px 36px 36px; color: #e9edf0; }
.tail { position: absolute; left: -20px; top: 0; }
.line { height: 57px; display: flex; align-items: center; font-size: 47.85px; line-height: 57px; white-space: nowrap; }
.link { font-size: 48.2px; }
.tall { height: 81px; padding-left: 2px; gap: 4px; }
.check { gap: 15px; }
.emoji { width: 67px; height: 67px; }
.arrows { gap: 5px; }
.sent { position: absolute; right: 23px; bottom: 10px; font-size: 36px; line-height: 42px; color: #84939e; }

.composer { margin-top: 25px; padding: 0 13px 0 14px; display: flex; align-items: center; justify-content: space-between; }
.field { width: 898px; height: 138px; border-radius: 69px; background: #202c33; display: flex; align-items: center; padding: 0 43px 0 34px; color: #8696a1; }
.placeholder { margin-left: 35px; padding-top: 2px; font-size: 54.4px; line-height: 64px; }
.clip { margin-left: auto; }
.camera { margin-left: 84px; }
.mic { width: 141px; height: 141px; border-radius: 50%; background: #24c265; display: flex; align-items: center; justify-content: center; box-shadow: 0 3px 5px rgba(0, 0, 0, .4); }

.nav { height: 132px; display: flex; justify-content: center; gap: 222.5px; padding: 48px 0 0 8px; }
```
